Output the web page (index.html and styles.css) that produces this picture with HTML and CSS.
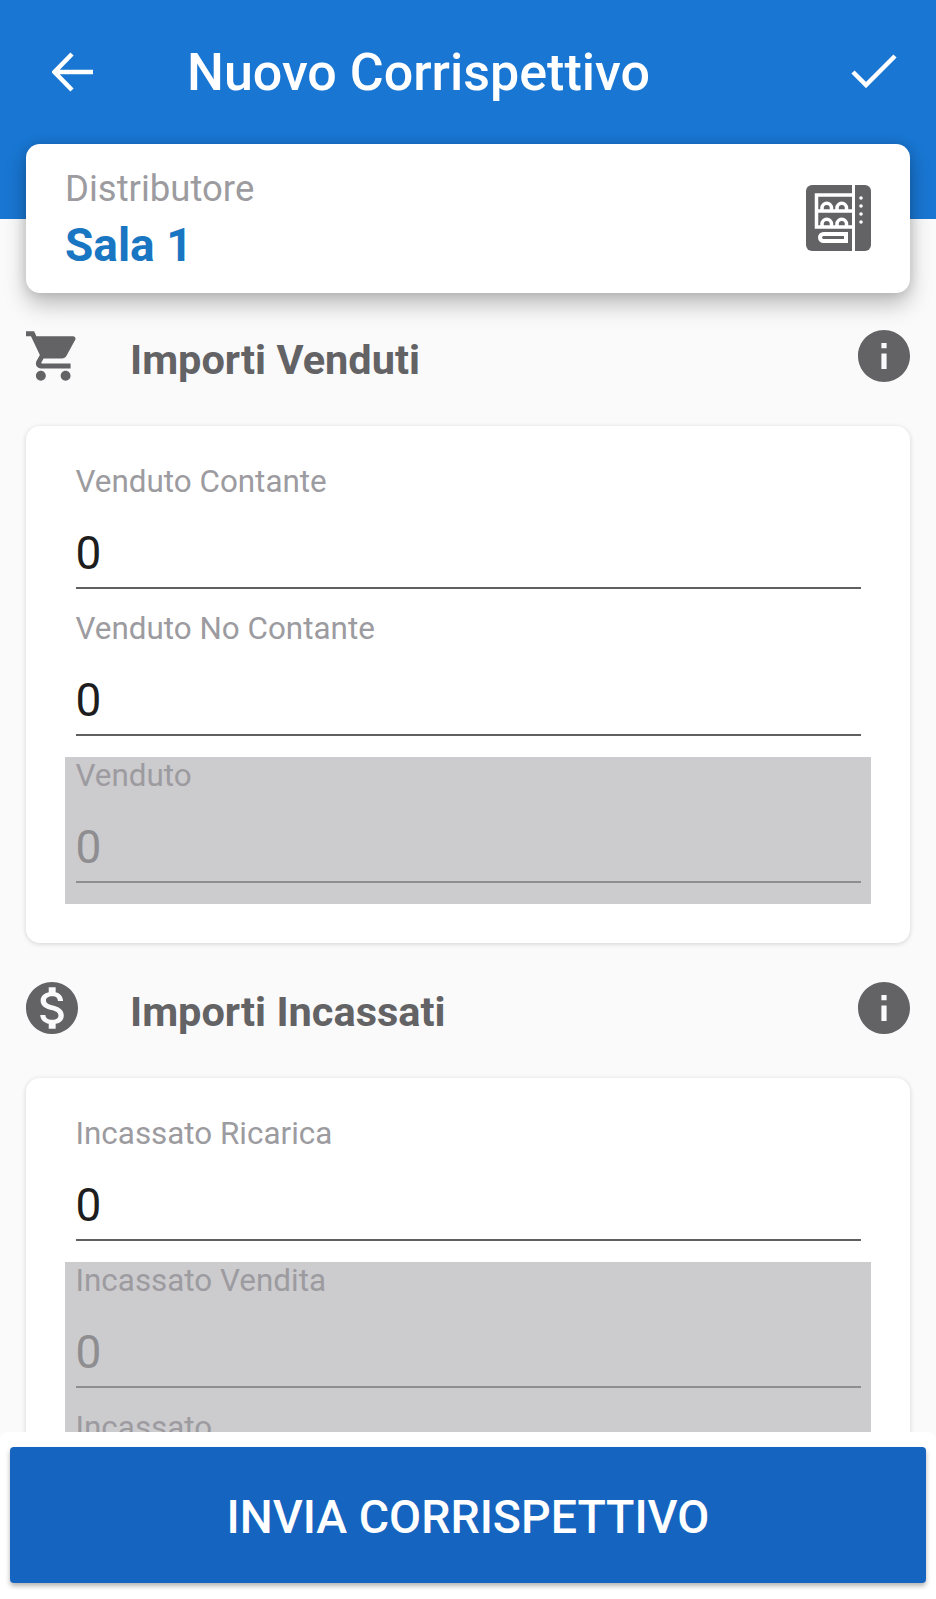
FILE: index.html
```html
<!DOCTYPE html>
<html lang="en">
<head>
  <meta charset="UTF-8">
  <meta name="viewport" content="width=device-width, initial-scale=1.0">
  <title>Nuovo Corrispettivo</title>
  <link rel="stylesheet" href="styles.css">
</head>
<body>
  <header class="topbar">
    <svg class="back-icon" viewBox="0 0 42 40"><path d="M41 20H3M20 2 2.500 20 20 38"/></svg>
    <h1>Nuovo Corrispettivo</h1>
    <svg class="check-icon" viewBox="0 0 46 34"><path d="M2 18 15 31 44 2"/></svg>
  </header>

  <main class="content">
    <div class="machine-card">
      <div>
        <div class="machine-label">Distributore</div>
        <div class="machine-name">Sala 1</div>
      </div>
      <svg class="machine-icon" viewBox="0 0 65 66">
        <rect class="m-body" width="65" height="66" rx="6"/>
        <rect class="m-line" x="46" width="3" height="66"/>
        <path class="m-frame" d="M48 10H10.500V42H48M10.500 26H48"/>
        <path class="m-item" d="M16 25v-2a4.750 4.750 0 0 1 9.500 0v2M31 25v-2a4.750 4.750 0 0 1 9.500 0v2M16 41v-2a4.750 4.750 0 0 1 9.500 0v2M31 41v-2a4.750 4.750 0 0 1 9.500 0v2"/>
        <path class="m-tray" d="M17.500 49H40V56H17.500a3.500 3.500 0 0 1 0-7Z"/>
        <circle class="m-dot" cx="55" cy="13" r="1.800"/>
        <circle class="m-dot" cx="55" cy="21" r="1.800"/>
        <circle class="m-dot" cx="55" cy="29" r="1.800"/>
        <circle class="m-dot" cx="55" cy="37" r="1.800"/>
      </svg>
    </div>

    <div class="section-row">
      <svg class="section-icon" viewBox="1 2 21 20"><path d="M7 18c-1.100 0-1.990.900-1.990 2S5.900 22 7 22s2-.900 2-2-.900-2-2-2zM1 2v2h2l3.600 7.590-1.350 2.450c-.160.280-.250.610-.250.960 0 1.100.900 2 2 2h12v-2H7.420c-.140 0-.250-.110-.250-.250l.030-.120.900-1.630h7.450c.750 0 1.410-.410 1.750-1.030l3.580-6.490c.080-.140.120-.310.120-.480 0-.550-.450-1-1-1H5.210l-.940-2H1zm16 16c-1.100 0-1.990.900-1.990 2s.890 2 1.990 2 2-.900 2-2-.900-2-2-2z"/></svg>
      <h2>Importi Venduti</h2>
      <svg class="info-icon" viewBox="2 2 20 20"><path d="M12 2C6.480 2 2 6.480 2 12s4.480 10 10 10 10-4.480 10-10S17.520 2 12 2zm1 15h-2v-6h2v6zm0-8h-2V7h2v2z"/></svg>
    </div>

    <section class="form-card">
      <div class="field">
        <label>Venduto Contante</label>
        <div class="value">0</div>
      </div>
      <div class="field">
        <label>Venduto No Contante</label>
        <div class="value">0</div>
      </div>
      <div class="field disabled">
        <label>Venduto</label>
        <div class="value">0</div>
      </div>
    </section>

    <div class="section-row">
      <svg class="section-icon" viewBox="2 2 20 20"><path d="M12 2C6.480 2 2 6.480 2 12s4.480 10 10 10 10-4.480 10-10S17.520 2 12 2zm1.410 16.090V20h-2.670v-1.930c-1.710-.360-3.160-1.460-3.270-3.400h1.960c.100 1.050.820 1.870 2.650 1.870 1.960 0 2.400-.980 2.400-1.590 0-.830-.440-1.610-2.670-2.140-2.480-.600-4.180-1.620-4.180-3.670 0-1.720 1.390-2.840 3.110-3.210V4h2.670v1.950c1.860.450 2.790 1.860 2.850 3.390H14.300c-.050-1.110-.640-1.870-2.220-1.870-1.500 0-2.400.680-2.400 1.640 0 .840.650 1.390 2.670 1.910s4.180 1.390 4.180 3.910c-.010 1.830-1.380 2.830-3.120 3.160z"/></svg>
      <h2>Importi Incassati</h2>
      <svg class="info-icon" viewBox="2 2 20 20"><path d="M12 2C6.480 2 2 6.480 2 12s4.480 10 10 10 10-4.480 10-10S17.520 2 12 2zm1 15h-2v-6h2v6zm0-8h-2V7h2v2z"/></svg>
    </div>

    <section class="form-card">
      <div class="field">
        <label>Incassato Ricarica</label>
        <div class="value">0</div>
      </div>
      <div class="field disabled">
        <label>Incassato Vendita</label>
        <div class="value">0</div>
      </div>
      <div class="field disabled">
        <label>Incassato</label>
        <div class="value">0</div>
      </div>
    </section>
  </main>

  <div class="bottom-bar">
    <button type="button">INVIA CORRISPETTIVO</button>
  </div>
</body>
</html>
```

FILE: styles.css
```css
html, body {
  height: 100%;
}
body {
  position: relative;
  height: 1599px;
  margin: 0;
  overflow: hidden;
  background-color: #fafafa;
  font-family: Roboto, "Liberation Sans", sans-serif;
  color: #636265;
}
.topbar {
  display: flex;
  align-items: flex-start;
  height: 219px;
  padding: 52px 39px 0 52px;
  box-sizing: border-box;
  background-color: #1976d2;
  color: white;
}
.topbar h1 {
  margin: -8px 0 0 93px;
  font-size: 52px;
  line-height: 58px;
  font-weight: 500;
}
.back-icon {
  width: 42px;
  height: 40px;
  fill: none;
  stroke: white;
  stroke-width: 4.500;
}
.check-icon {
  width: 46px;
  height: 34px;
  margin: 2px 0 0 auto;
  fill: none;
  stroke: white;
  stroke-width: 4.500;
}
.content {
  padding: 0 26px;
}
.machine-card {
  display: flex;
  justify-content: space-between;
  align-items: center;
  height: 149px;
  margin-top: -75px;
  padding: 0 39px;
  box-sizing: border-box;
  background-color: white;
  border-radius: 14px;
  box-shadow: 0 12px 22px rgba(0, 0, 0, 0.24), 0 0 12px rgba(0, 0, 0, 0.14);
  position: relative;
}
.machine-label {
  margin-top: 3px;
  font-size: 36.500px;
  line-height: 40px;
  color: #9c9ba0;
}
.machine-name {
  margin-top: 10px;
  font-size: 46px;
  line-height: 52px;
  font-weight: 700;
  color: #1976c2;
}
.machine-icon {
  width: 65px;
  height: 66px;
  margin-top: -2px;
}
.m-body {
  fill: #636265;
}
.m-line {
  fill: white;
}
.m-frame {
  fill: none;
  stroke: white;
  stroke-width: 3.500;
}
.m-item {
  fill: none;
  stroke: white;
  stroke-width: 3.500;
}
.m-tray {
  fill: none;
  stroke: white;
  stroke-width: 4;
}
.m-dot {
  fill: white;
}
.section-row {
  display: flex;
  align-items: flex-start;
  height: 52px;
  margin: 39px 0 44px;
}
.machine-card + .section-row {
  margin-top: 37px;
}
.section-row h2 {
  margin: 4px 0 0 52px;
  font-size: 41.500px;
  line-height: 52px;
  font-weight: 700;
}
.section-icon {
  width: 52px;
  height: 52px;
  flex-shrink: 0;
  fill: #636265;
}
.info-icon {
  width: 52px;
  height: 52px;
  margin-left: auto;
  fill: #636265;
}
.form-card {
  padding: 37px 39px 39px;
  background-color: white;
  border-radius: 14px;
  box-shadow: 0 1px 5px rgba(0, 0, 0, 0.16);
}
.field {
  height: 147px;
  padding: 0 10.500px;
  box-sizing: border-box;
}
.field label {
  display: block;
  padding-top: 1px;
  font-size: 31.400px;
  line-height: 36px;
  color: #9c9ba0;
}
.value {
  height: 89px;
  padding-top: 23px;
  box-sizing: border-box;
  border-bottom: 2px solid #605f62;
  font-size: 46px;
  line-height: 60px;
  color: #1d1d20;
}
.field.disabled {
  background-color: #cccbce;
}
.field.disabled .value {
  border-bottom-color: #8e8d90;
  color: #8e8d90;
}
.bottom-bar {
  position: absolute;
  left: 0;
  right: 0;
  bottom: 0;
  height: 167px;
  padding: 15px 10px 0;
  box-sizing: border-box;
  background-color: white;
  border-radius: 8px 8px 0 0;
}
.bottom-bar button {
  display: block;
  width: 100%;
  height: 136px;
  padding-top: 4px;
  border: none;
  border-radius: 4px;
  background-color: #1565c0;
  box-shadow: 0 3px 5px rgba(0, 0, 0, 0.3);
  color: white;
  font-family: inherit;
  font-size: 46.500px;
  font-weight: 500;
}
```
